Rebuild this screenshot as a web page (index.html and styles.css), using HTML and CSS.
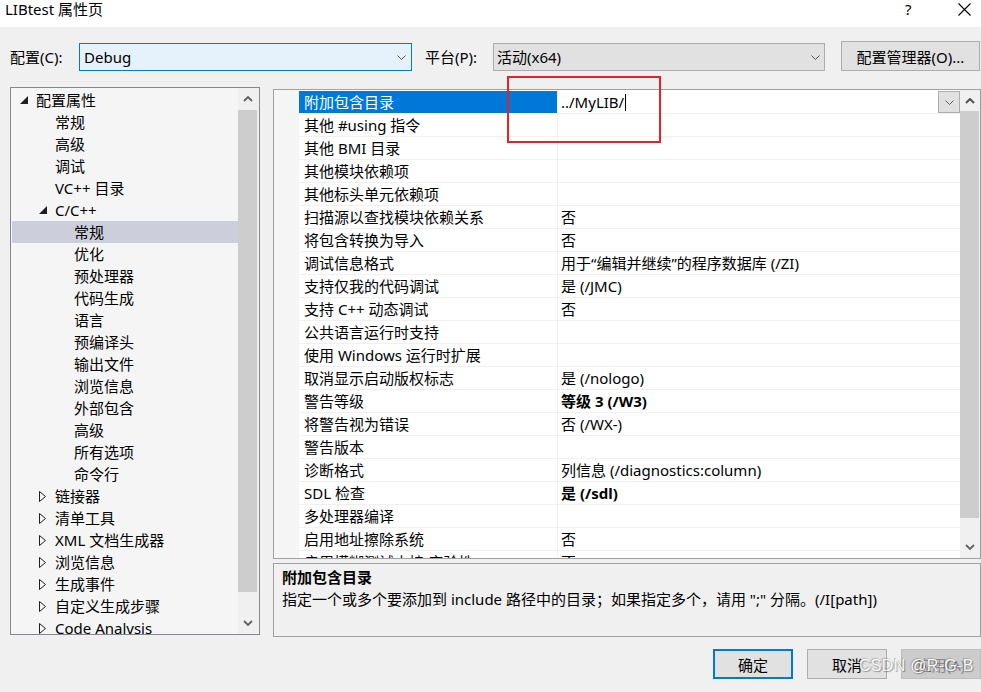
FILE: index.html
```html
<!DOCTYPE html>
<html lang="zh-CN">
<head>
<meta charset="utf-8">
<title>LIBtest 属性页</title>
<link rel="stylesheet" href="styles.css">
</head>
<body>
<div class="titlebar">
  <span class="title">LIBtest 属性页</span>
  <span class="help">?</span>
  <span class="close"><svg width="13" height="13" viewBox="0 0 13 13"><path d="M0.5 0.5 L12.5 12.5 M12.5 0.5 L0.5 12.5" stroke="#000" stroke-width="1.1" fill="none"/></svg></span>
</div>

<div class="config-row">
  <span class="lbl lbl-config">配置(C):</span>
  <div class="combo combo-active"><span>Debug</span><svg class="chev" width="9" height="5" viewBox="0 0 9 5"><polyline points="0.5,0.5 4.5,4.5 8.5,0.5" fill="none" stroke="#505050" stroke-width="1"/></svg></div>
  <span class="lbl lbl-platform">平台(P):</span>
  <div class="combo combo-platform"><span>活动(x64)</span><svg class="chev" width="9" height="5" viewBox="0 0 9 5"><polyline points="0.5,0.5 4.5,4.5 8.5,0.5" fill="none" stroke="#505050" stroke-width="1"/></svg></div>
  <button class="btn btn-manager">配置管理器(O)...</button>
</div>

<div class="main">
  <div class="tree">
    <ul class="tree-list">
      <li class="trow l0"><span class="tw"><svg width="8" height="8" viewBox="0 0 8 8"><polygon points="8,0 8,8 0,8" fill="#1e1e1e"/></svg></span>配置属性</li>
      <li class="trow l1"><span class="tw"></span>常规</li>
      <li class="trow l1"><span class="tw"></span>高级</li>
      <li class="trow l1"><span class="tw"></span>调试</li>
      <li class="trow l1"><span class="tw"></span>VC++ 目录</li>
      <li class="trow l1"><span class="tw"><svg width="8" height="8" viewBox="0 0 8 8"><polygon points="8,0 8,8 0,8" fill="#1e1e1e"/></svg></span>C/C++</li>
      <li class="trow l2 selected"><span class="tw"></span>常规</li>
      <li class="trow l2"><span class="tw"></span>优化</li>
      <li class="trow l2"><span class="tw"></span>预处理器</li>
      <li class="trow l2"><span class="tw"></span>代码生成</li>
      <li class="trow l2"><span class="tw"></span>语言</li>
      <li class="trow l2"><span class="tw"></span>预编译头</li>
      <li class="trow l2"><span class="tw"></span>输出文件</li>
      <li class="trow l2"><span class="tw"></span>浏览信息</li>
      <li class="trow l2"><span class="tw"></span>外部包含</li>
      <li class="trow l2"><span class="tw"></span>高级</li>
      <li class="trow l2"><span class="tw"></span>所有选项</li>
      <li class="trow l2"><span class="tw"></span>命令行</li>
      <li class="trow l1"><span class="tw"><svg width="8" height="11" viewBox="0 0 8 11"><polygon points="0.5,0.5 6.5,5.5 0.5,10.5" fill="none" stroke="#1e1e1e" stroke-width="1"/></svg></span>链接器</li>
      <li class="trow l1"><span class="tw"><svg width="8" height="11" viewBox="0 0 8 11"><polygon points="0.5,0.5 6.5,5.5 0.5,10.5" fill="none" stroke="#1e1e1e" stroke-width="1"/></svg></span>清单工具</li>
      <li class="trow l1"><span class="tw"><svg width="8" height="11" viewBox="0 0 8 11"><polygon points="0.5,0.5 6.5,5.5 0.5,10.5" fill="none" stroke="#1e1e1e" stroke-width="1"/></svg></span>XML 文档生成器</li>
      <li class="trow l1"><span class="tw"><svg width="8" height="11" viewBox="0 0 8 11"><polygon points="0.5,0.5 6.5,5.5 0.5,10.5" fill="none" stroke="#1e1e1e" stroke-width="1"/></svg></span>浏览信息</li>
      <li class="trow l1"><span class="tw"><svg width="8" height="11" viewBox="0 0 8 11"><polygon points="0.5,0.5 6.5,5.5 0.5,10.5" fill="none" stroke="#1e1e1e" stroke-width="1"/></svg></span>生成事件</li>
      <li class="trow l1"><span class="tw"><svg width="8" height="11" viewBox="0 0 8 11"><polygon points="0.5,0.5 6.5,5.5 0.5,10.5" fill="none" stroke="#1e1e1e" stroke-width="1"/></svg></span>自定义生成步骤</li>
      <li class="trow l1"><span class="tw"><svg width="8" height="11" viewBox="0 0 8 11"><polygon points="0.5,0.5 6.5,5.5 0.5,10.5" fill="none" stroke="#1e1e1e" stroke-width="1"/></svg></span>Code Analysis</li>
    </ul>
    <div class="vscroll tree-scroll">
      <div class="arrow"><svg width="10" height="6" viewBox="0 0 10 6"><polyline points="1,5 5,1 9,5" fill="none" stroke="#606060" stroke-width="1.8"/></svg></div>
      <div class="thumb tree-thumb"></div>
      <div class="track"></div>
      <div class="arrow"><svg width="10" height="6" viewBox="0 0 10 6"><polyline points="1,1 5,5 9,1" fill="none" stroke="#606060" stroke-width="1.8"/></svg></div>
    </div>
  </div>

  <div class="right">
    <div class="grid">
      <div class="gutter"></div>
      <div class="rows">
        <div class="prow"><div class="pname sel">附加包含目录</div><div class="pval edit"><span>../MyLIB/</span><span class="caret"></span><span class="ddbtn"><svg width="9" height="5" viewBox="0 0 9 5"><polyline points="0.5,0.5 4.5,4.5 8.5,0.5" fill="none" stroke="#606060" stroke-width="1"/></svg></span></div></div>
        <div class="prow"><div class="pname">其他 #using 指令</div><div class="pval"></div></div>
        <div class="prow"><div class="pname">其他 BMI 目录</div><div class="pval"></div></div>
        <div class="prow"><div class="pname">其他模块依赖项</div><div class="pval"></div></div>
        <div class="prow"><div class="pname">其他标头单元依赖项</div><div class="pval"></div></div>
        <div class="prow"><div class="pname">扫描源以查找模块依赖关系</div><div class="pval">否</div></div>
        <div class="prow"><div class="pname">将包含转换为导入</div><div class="pval">否</div></div>
        <div class="prow"><div class="pname">调试信息格式</div><div class="pval">用于“编辑并继续”的程序数据库 (/ZI)</div></div>
        <div class="prow"><div class="pname">支持仅我的代码调试</div><div class="pval">是 (/JMC)</div></div>
        <div class="prow"><div class="pname">支持 C++ 动态调试</div><div class="pval">否</div></div>
        <div class="prow"><div class="pname">公共语言运行时支持</div><div class="pval"></div></div>
        <div class="prow"><div class="pname">使用 Windows 运行时扩展</div><div class="pval"></div></div>
        <div class="prow"><div class="pname">取消显示启动版权标志</div><div class="pval">是 (/nologo)</div></div>
        <div class="prow"><div class="pname">警告等级</div><div class="pval bold">等级 3 (/W3)</div></div>
        <div class="prow"><div class="pname">将警告视为错误</div><div class="pval">否 (/WX-)</div></div>
        <div class="prow"><div class="pname">警告版本</div><div class="pval"></div></div>
        <div class="prow"><div class="pname">诊断格式</div><div class="pval">列信息 (/diagnostics:column)</div></div>
        <div class="prow"><div class="pname">SDL 检查</div><div class="pval bold">是 (/sdl)</div></div>
        <div class="prow"><div class="pname">多处理器编译</div><div class="pval"></div></div>
        <div class="prow"><div class="pname">启用地址擦除系统</div><div class="pval">否</div></div>
        <div class="prow"><div class="pname">启用模糊测试支持(实验性)</div><div class="pval">否</div></div>
      </div>
      <div class="vscroll grid-scroll">
        <div class="arrow up"><svg width="10" height="6" viewBox="0 0 10 6"><polyline points="1,5 5,1 9,5" fill="none" stroke="#505050" stroke-width="2"/></svg></div>
        <div class="thumb grid-thumb"></div>
        <div class="track"></div>
        <div class="arrow"><svg width="10" height="6" viewBox="0 0 10 6"><polyline points="1,1 5,5 9,1" fill="none" stroke="#606060" stroke-width="1.8"/></svg></div>
      </div>
    </div>
    <div class="desc">
      <div class="desc-title">附加包含目录</div>
      <div class="desc-text">指定一个或多个要添加到 include 路径中的目录；如果指定多个，请用 ";" 分隔。(/I[path])</div>
    </div>
  </div>
</div>

<div class="footer">
  <button class="dbtn default">确定</button>
  <button class="dbtn">取消</button>
  <button class="dbtn disabled">应用(A)</button>
</div>

<div class="red-box"></div>
<div class="watermark">CSDN @R-G-B</div>
</body>
</html>
```

FILE: styles.css
```css
* { box-sizing: border-box; }
html, body { margin: 0; padding: 0; }
body {
  width: 981px;
  height: 692px;
  background: #f0f0f0;
  font-family: "Noto Sans", "Noto Sans CJK SC", sans-serif;
  font-size: 15px;
  color: #000;
  overflow: hidden;
  position: relative;
}

/* title bar */
.titlebar {
  height: 27px;
  background: #fff;
  display: flex;
  align-items: flex-start;
}
.title { padding-left: 5px; line-height: 19px; }
.help { margin-left: auto; line-height: 19px; width: 8px; }
.close { margin-left: 45px; margin-right: 10px; padding-top: 3px; display: flex; }

/* config row */
.config-row {
  display: flex;
  align-items: flex-end;
  height: 30px;
  margin-top: 14px;
  padding-left: 10px;
}
.lbl { height: 28px; line-height: 28px; white-space: nowrap; }
.lbl-config { width: 69px; }
.lbl-platform { width: 68px; margin-left: 13px; }
.combo {
  height: 28px;
  border: 1px solid #adadad;
  display: flex;
  align-items: center;
  justify-content: space-between;
  line-height: 26px;
}
.combo-active {
  width: 333px;
  border-color: #0078d7;
  background: #e5f1fb;
  padding: 0 5px 0 4px;
}
.combo-platform {
  width: 332px;
  background: #e1e1e1;
  padding: 0 4px 0 3px;
}
.btn {
  font: inherit;
  color: #000;
  background: #e1e1e1;
  border: 1px solid #adadad;
  padding: 0;
}
.btn-manager { width: 139px; height: 30px; margin-left: 16px; }

/* main */
.main {
  display: flex;
  height: 550px;
  margin-top: 16px;
  padding-left: 10px;
}
.tree {
  width: 250px;
  height: 548px;
  border: 1px solid #828790;
  background: #f5f5f5;
  display: flex;
}
.tree-list {
  list-style: none;
  margin: 0;
  padding: 1px 0 0 0;
  width: 227px;
  overflow: hidden;
}
.trow {
  height: 22px;
  line-height: 22px;
  margin-left: 1px;
  display: flex;
  align-items: center;
  white-space: nowrap;
}
.trow.l0 { padding-left: 5px; }
.trow.l1 { padding-left: 24px; }
.trow.l2 { padding-left: 43px; }
.trow.selected { background: #cccedb; }
.tw {
  width: 19px;
  height: 22px;
  display: flex;
  align-items: center;
  padding-left: 3px;
  flex-shrink: 0;
}

.vscroll {
  background: #f0f0f0;
  display: flex;
  flex-direction: column;
}
.vscroll .arrow {
  height: 22px;
  display: flex;
  align-items: center;
  justify-content: center;
  flex-shrink: 0;
}
.vscroll .thumb { background: #cdcdcd; flex-shrink: 0; }
.vscroll .track { flex: 1; }
.tree-scroll { width: 21px; }
.tree-scroll .arrow { padding-right: 2px; }
.tree-thumb { height: 482px; margin-right: 2px; }

.right {
  width: 708px;
  margin-left: 13px;
  display: flex;
  flex-direction: column;
}
.grid {
  margin-top: 2px;
  height: 470px;
  border: 1px solid #a0a0a0;
  background: #fff;
  display: flex;
}
.gutter { width: 25px; background: #f5f5f5; flex-shrink: 0; }
.rows { width: 661px; overflow: hidden; flex-shrink: 0; padding-top: 1px; }
.prow {
  display: flex;
  height: 23px;
  border-bottom: 1px solid #f0f0f0;
}
.pname {
  width: 258px;
  padding-left: 5px;
  line-height: 22px;
  white-space: nowrap;
  overflow: hidden;
  flex-shrink: 0;
}
.pname.sel { background: #0078d7; color: #fff; }
.pval {
  flex: 1;
  border-left: 1px solid #f0f0f0;
  padding-left: 3px;
  line-height: 22px;
  white-space: nowrap;
}
.pval.bold { font-weight: 700; }
.pval.edit { display: flex; align-items: center; }
.caret {
  width: 1px;
  height: 17px;
  background: #000;
  margin-left: 1px;
}
.ddbtn {
  margin-left: auto;
  width: 22px;
  height: 22px;
  align-self: flex-start;
  border: 1px solid #adadad;
  background: #e1e1e1;
  display: flex;
  align-items: center;
  justify-content: center;
}
.grid-scroll { width: 20px; }
.grid-scroll .arrow.up { height: 21px; }
.grid-thumb { height: 407px; margin-right: 1px; }

.desc {
  margin-top: 4px;
  height: 74px;
  border: 1px solid #a0a0a0;
  background: #f0f0f0;
  padding: 2px 0 0 8px;
}
.desc-title { font-weight: 700; line-height: 22px; }
.desc-text { line-height: 23px; white-space: nowrap; }

/* footer */
.footer {
  display: flex;
  justify-content: flex-end;
  gap: 14px;
  margin-top: 12px;
}
.dbtn {
  font: inherit;
  width: 80px;
  height: 30px;
  background: #e1e1e1;
  border: 1px solid #adadad;
  color: #000;
  padding: 0;
}
.dbtn.default { border: 2px solid #0078d7; }
.dbtn.disabled { background: #cccccc; border-color: #bfbfbf; color: #8a8a8a; }

/* overlays */
.red-box {
  position: absolute;
  left: 507px;
  top: 76px;
  width: 154px;
  height: 67px;
  border: 2px solid #e8202a;
}
.watermark {
  position: absolute;
  left: 859px;
  top: 655px;
  font-family: "Liberation Sans", Arial, sans-serif;
  font-size: 16px;
  line-height: 22px;
  letter-spacing: 0.3px;
  color: rgba(255, 255, 255, 0.92);
  text-shadow: 1px 1px 1px rgba(0, 0, 0, 0.35), -1px -1px 1px rgba(0, 0, 0, 0.2);
  white-space: nowrap;
}
```
